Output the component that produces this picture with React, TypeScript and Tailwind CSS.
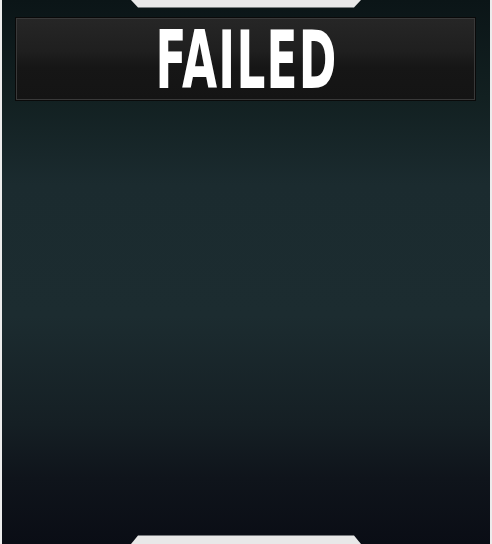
import React from "react";

export default function App() {
  return (
    <div className="relative w-[492px] h-[544px] bg-[#ececec] px-[2px]">
      <div className="h-full bg-[linear-gradient(to_bottom,#0b1517_0%,#122021_18%,#1b2b2f_34%,#1c2c30_58%,#151f24_78%,#0f141b_88%,#0a0d15_100%)] flex flex-col pt-[18px] pl-[14px] pr-[15px]">
        <div className="h-[82px] border border-[#393939] bg-[linear-gradient(to_bottom,#262626_0%,#1f1f1f_40%,#161616_60%,#141414_100%)] flex items-center justify-center shadow-[0_0_0_1px_#0a0a0a]">
          <span className="font-['DejaVu_Sans_Condensed','DejaVu_Sans',sans-serif] font-bold text-white text-[80px] leading-none scale-x-[0.63] tracking-[2px] mt-[3px] ml-[2px]">
            FAILED
          </span>
        </div>
      </div>
      <svg className="absolute left-0 top-0" width="492" height="8" viewBox="0 0 492 8">
        <polygon points="131,0 361,0 354,7.5 138,7.5" fill="#e8e8e8" />
      </svg>
      <svg className="absolute left-0 bottom-0" width="492" height="9" viewBox="0 0 492 9">
        <polygon points="138,0.5 354,0.5 361,9 131,9" fill="#e8e8e8" />
      </svg>
    </div>
  );
}
